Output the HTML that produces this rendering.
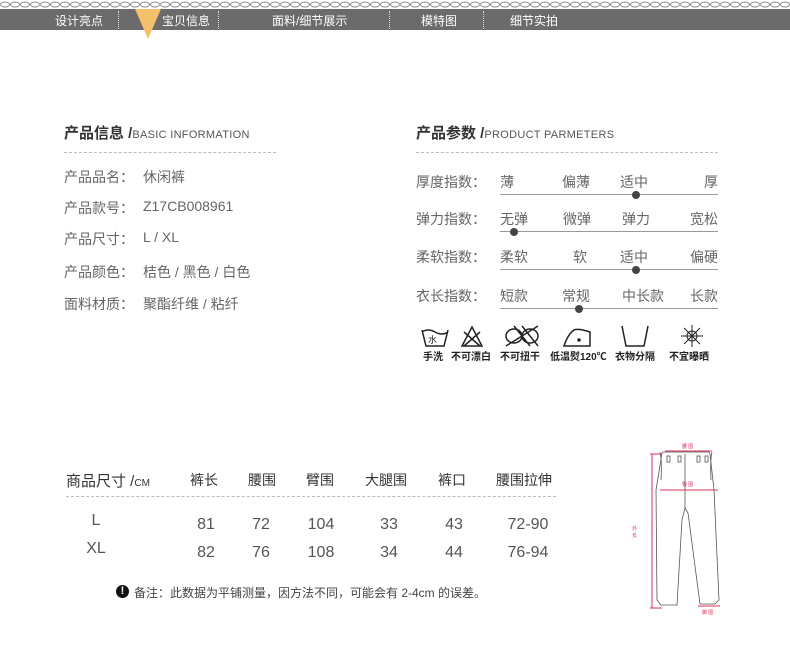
<!DOCTYPE html><html><head><meta charset="utf-8"><style>
body{margin:0;width:790px;height:649px;background:#fff;position:relative;overflow:hidden;font-family:"Liberation Sans","Noto Sans CJK SC",sans-serif;color:#555}
.a{position:absolute;white-space:nowrap}
.t{font-size:14px;color:#666}
.h{font-size:15px;color:#333;font-weight:bold}
.h small{font-size:11px;font-weight:normal;color:#555;letter-spacing:.3px}
.dash{position:absolute;border-top:1px dashed #bbb;height:0}
.ln{position:absolute;height:1px;background:#999;left:500px;width:218px}
.dot{position:absolute;width:8px;height:8px;border-radius:50%;background:#444}
.nav{font-size:12px;color:#fff;top:12px}
.sep{position:absolute;top:11px;height:18px;border-left:1px dotted #ddd}
.ic{font-size:10px;color:#222;top:348px;font-weight:bold}
.n{font-size:16px;color:#555;text-align:center;width:60px}
.v{position:absolute;left:143px}
</style></head><body>
<svg class="a" style="left:0;top:0" width="790" height="9"><defs><pattern id="c" width="10" height="9" patternUnits="userSpaceOnUse"><ellipse cx="5" cy="4.5" rx="4.5" ry="2.5" fill="none" stroke="#888" stroke-width="1"/></pattern></defs><rect width="790" height="9" fill="url(#c)"/></svg>
<div class="a" style="left:0;top:9px;width:790px;height:21px;background:#6b6b6b"></div>
<svg class="a" style="left:135px;top:9px" width="26" height="30"><polygon points="0,0 26,0 13,30" fill="#f3c06b"/></svg>
<div class="a nav" style="left:55px">设计亮点</div>
<div class="sep" style="left:118px"></div>
<div class="a nav" style="left:162px">宝贝信息</div>
<div class="sep" style="left:218px"></div>
<div class="a nav" style="left:272px">面料/细节展示</div>
<div class="sep" style="left:389px"></div>
<div class="a nav" style="left:421px">模特图</div>
<div class="sep" style="left:483px"></div>
<div class="a nav" style="left:510px">细节实拍</div>

<div class="a h" style="left:64px;top:122px">产品信息 /<small>BASIC INFORMATION</small></div>
<div class="dash" style="left:64px;top:152px;width:212px"></div>
<div class="a t" style="left:64px;top:167px">产品品名：</div><div class="a t v" style="top:167px">休闲裤</div>
<div class="a t" style="left:64px;top:198px">产品款号：</div><div class="a t v" style="top:198px">Z17CB008961</div>
<div class="a t" style="left:64px;top:229px">产品尺寸：</div><div class="a t v" style="top:229px">L / XL</div>
<div class="a t" style="left:64px;top:262px">产品颜色：</div><div class="a t v" style="top:262px">桔色 / 黑色 / 白色</div>
<div class="a t" style="left:64px;top:294px">面料材质：</div><div class="a t v" style="top:294px">聚酯纤维 / 粘纤</div>

<div class="a h" style="left:416px;top:122px">产品参数 /<small>PRODUCT PARMETERS</small></div>
<div class="dash" style="left:416px;top:152px;width:302px"></div>

<div class="a t" style="left:416px;top:172px">厚度指数：</div>
<div class="a t" style="left:500px;top:172px">薄</div><div class="a t" style="left:562px;top:172px">偏薄</div><div class="a t" style="left:620px;top:172px">适中</div><div class="a t" style="left:704px;top:172px">厚</div>
<div class="ln" style="top:194px"></div><div class="dot" style="left:632px;top:191px"></div>

<div class="a t" style="left:416px;top:209px">弹力指数：</div>
<div class="a t" style="left:500px;top:209px">无弹</div><div class="a t" style="left:563px;top:209px">微弹</div><div class="a t" style="left:622px;top:209px">弹力</div><div class="a t" style="left:690px;top:209px">宽松</div>
<div class="ln" style="top:231px"></div><div class="dot" style="left:510px;top:228px"></div>

<div class="a t" style="left:416px;top:247px">柔软指数：</div>
<div class="a t" style="left:500px;top:247px">柔软</div><div class="a t" style="left:573px;top:247px">软</div><div class="a t" style="left:620px;top:247px">适中</div><div class="a t" style="left:690px;top:247px">偏硬</div>
<div class="ln" style="top:269px"></div><div class="dot" style="left:632px;top:266px"></div>

<div class="a t" style="left:416px;top:286px">衣长指数：</div>
<div class="a t" style="left:500px;top:286px">短款</div><div class="a t" style="left:562px;top:286px">常规</div><div class="a t" style="left:622px;top:286px">中长款</div><div class="a t" style="left:690px;top:286px">长款</div>
<div class="ln" style="top:308px"></div><div class="dot" style="left:575px;top:305px"></div>

<svg class="a" style="left:418px;top:322px" width="310" height="26" fill="none" stroke="#222" stroke-width="1.5">
<path d="M4 8 L8 24 H26 L30 8 M4 10 Q10 6 17 10 Q24 14 30 10"/><text x="10" y="21" font-size="9" fill="#222" stroke="none">水</text>
<path d="M44 24 L54 5 L64 24 Z M46 10 L62 24 M62 10 L46 24"/>
<path d="M88 14 a8 7 0 1 1 16 0 a8 7 0 1 1 16 0 a8 7 0 1 1 -16 0 a8 7 0 1 1 -16 0 M96 4 L112 24 M104 4 L120 24 M88 24 L120 4"/>
<path d="M146 24 H172 V10 Q160 6 156 8 Q150 12 146 24 Z"/><circle cx="161" cy="18" r="1" fill="#222"/>
<path d="M204 4 L208 24 H226 L230 4"/>
<g stroke-width="1"><circle cx="274" cy="14" r="5"/><path d="M266 6 L282 22 M282 6 L266 22 M274 3 V25 M263 14 H285"/></g>
</svg>
<div class="a ic" style="left:423px">手洗</div>
<div class="a ic" style="left:451px">不可漂白</div>
<div class="a ic" style="left:500px">不可扭干</div>
<div class="a ic" style="left:550px">低温熨120℃</div>
<div class="a ic" style="left:615px">衣物分隔</div>
<div class="a ic" style="left:669px">不宜曝晒</div>

<div class="a" style="left:66px;top:470px;font-size:15px;color:#333">商品尺寸 /<span style="font-size:10px">CM</span></div>
<div class="a" style="left:190px;top:470px;font-size:14px;color:#333">裤长</div>
<div class="a" style="left:248px;top:470px;font-size:14px;color:#333">腰围</div>
<div class="a" style="left:306px;top:470px;font-size:14px;color:#333">臂围</div>
<div class="a" style="left:365px;top:470px;font-size:14px;color:#333">大腿围</div>
<div class="a" style="left:438px;top:470px;font-size:14px;color:#333">裤口</div>
<div class="a" style="left:496px;top:470px;font-size:14px;color:#333">腰围拉伸</div>
<div class="dash" style="left:66px;top:496px;width:490px"></div>
<div class="a n" style="left:66px;top:512px;width:60px">L</div>
<div class="a n" style="left:66px;top:540px;width:60px">XL</div>
<div class="a n" style="left:176px;top:516px">81</div><div class="a n" style="left:231px;top:516px">72</div><div class="a n" style="left:291px;top:516px">104</div><div class="a n" style="left:359px;top:516px">33</div><div class="a n" style="left:424px;top:516px">43</div><div class="a n" style="left:498px;top:516px">72-90</div>
<div class="a n" style="left:176px;top:544px">82</div><div class="a n" style="left:231px;top:544px">76</div><div class="a n" style="left:291px;top:544px">108</div><div class="a n" style="left:359px;top:544px">34</div><div class="a n" style="left:424px;top:544px">44</div><div class="a n" style="left:498px;top:544px">76-94</div>

<div class="a" style="left:116px;top:585px;width:13px;height:13px;border-radius:50%;background:#111;color:#fff;font-size:11px;font-weight:bold;text-align:center;line-height:13px">!</div>
<div class="a" style="left:134px;top:584px;font-size:12px;color:#444">备注：此数据为平铺测量，因方法不同，可能会有 2-4cm 的误差。</div>

<svg class="a" style="left:622px;top:440px" width="100" height="180" fill="none">
<g stroke="#555" stroke-width="0.8">
<path d="M40 13 L41 12 H87 L88 14 L92 50 L97 160 L93 164 H78 L66 73 L63 68 L60 80 L55 165 H39 L35 160 L34 50 Z"/>
<path d="M63 14 V68 M38 12 Q40 20 39 40 M90 12 Q88 20 89 40"/>
<rect x="45" y="16" width="3" height="6"/><rect x="56" y="16" width="3" height="6"/><rect x="75" y="16" width="3" height="6"/><rect x="83" y="16" width="3" height="6"/>
</g>
<g stroke="#d8305a" stroke-width="1"><path d="M43 11 H90 M38 50 H96 M30 14 V168 M28 14 H40 M28 168 H40 M76 166 H98"/></g>
<g fill="#d8305a" font-size="5" font-family="Noto Sans CJK SC"><text x="60" y="8">腰 围</text><text x="60" y="46">臀 围</text><text x="10" y="90">外</text><text x="10" y="97">长</text><text x="80" y="174">脚 围</text></g>
</svg>
</body></html>
